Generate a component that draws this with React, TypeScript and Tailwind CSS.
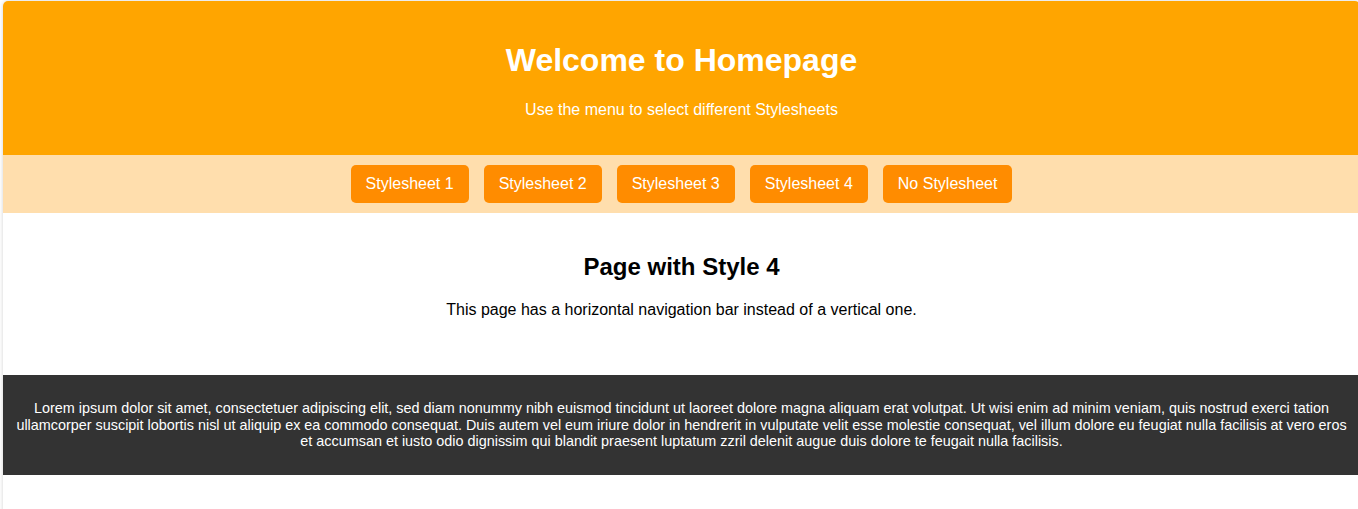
const BOUTONS = ["Stylesheet 1", "Stylesheet 2", "Stylesheet 3", "Stylesheet 4", "No Stylesheet"];

const LOREM =
  "Lorem ipsum dolor sit amet, consectetuer adipiscing elit, sed diam nonummy nibh euismod tincidunt ut laoreet dolore magna aliquam erat volutpat. Ut wisi enim ad minim veniam, quis nostrud exerci tation ullamcorper suscipit lobortis nisl ut aliquip ex ea commodo consequat. Duis autem vel eum iriure dolor in hendrerit in vulputate velit esse molestie consequat, vel illum dolore eu feugiat nulla facilisis at vero eros et accumsan et iusto odio dignissim qui blandit praesent luptatum zzril delenit augue duis dolore te feugait nulla facilisis.";

export default function App() {
  return (
    <div className="h-[509px] overflow-hidden bg-white font-['Liberation_Sans',Arial,sans-serif]">
      <div className="ml-[3px] mt-[1px] min-h-[540px] w-[1357px] overflow-hidden rounded-[5px] bg-white shadow-[0_0_4px_rgba(0,0,0,0.18)]">
        <header className="bg-[#ffa500] p-[20px] text-center text-white">
          <h1 className="my-[21.44px] text-[32px] font-bold leading-[37px]">Welcome to Homepage</h1>
          <p className="my-[16px] text-[16px] leading-[18.4px]">Use the menu to select different Stylesheets</p>
        </header>

        <nav className="flex justify-center gap-[15px] bg-[#ffdead] py-[10px]">
          {BOUTONS.map((b) => (
            <button
              key={b}
              className="rounded-[5px] bg-[#ff8c00] px-[15px] py-[10px] text-[16px] leading-[18px] text-white"
            >
              {b}
            </button>
          ))}
        </nav>

        <main className="p-[20px] text-center text-black">
          <h2 className="my-[19.92px] text-[24px] font-bold leading-[27.6px]">Page with Style 4</h2>
          <p className="my-[16px] text-[16px] leading-[18.4px]">
            This page has a horizontal navigation bar instead of a vertical one.
          </p>
        </main>

        <footer className="mt-[20px] bg-[#333333] px-[12px] py-[25px] text-center text-[14.4px] leading-[16.5px] text-white">
          {LOREM}
        </footer>
      </div>
    </div>
  );
}
